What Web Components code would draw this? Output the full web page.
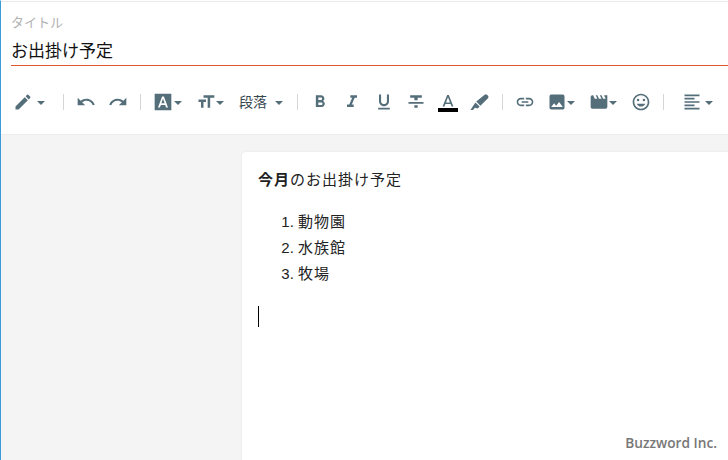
<!DOCTYPE html>
<html lang="ja">
<head>
<meta charset="utf-8">
<title>editor</title>
<style>
  html, body { margin: 0; height: 100%; overflow: hidden; }
  body { font-family: "Liberation Sans", "Noto Sans CJK JP", sans-serif; }
  li span { letter-spacing: 1px; }
</style>
</head>
<body>
<post-editor>
  <title-field label="タイトル" value="お出掛け予定"></title-field>
  <editor-toolbar></editor-toolbar>
  <editor-page>
    <p><b>今月</b>のお出掛け予定</p>
    <ol>
      <li><span>動物園</span></li>
      <li><span>水族館</span></li>
      <li><span>牧場</span></li>
    </ol>
    <text-caret></text-caret>
  </editor-page>
  <span slot="mark">Buzzword Inc.</span>
</post-editor>

<script>
const FONT = `"Liberation Sans", "Noto Sans CJK JP", sans-serif`;

const ICONS = {
  pencil: `<path d="M3 17.25V21h3.75L17.81 9.94l-3.75-3.75L3 17.25zM20.71 7.04a1 1 0 0 0 0-1.41l-2.34-2.34a1 1 0 0 0-1.41 0l-1.83 1.83 3.75 3.75 1.83-1.83z"/>`,
  undo: `<path d="M12.5 8c-2.65 0-5.05.99-6.9 2.6L2 7v9h9l-3.62-3.62c1.39-1.16 3.16-1.88 5.12-1.88 3.54 0 6.55 2.31 7.6 5.5l2.37-.78C21.08 11.03 17.15 8 12.5 8z"/>`,
  redo: `<path d="M18.4 10.6C16.55 8.99 14.15 8 11.5 8c-4.65 0-8.58 3.03-9.96 7.22L3.9 16c1.05-3.19 4.05-5.5 7.6-5.5 1.95 0 3.73.72 5.12 1.88L13 16h9V7l-3.6 3.6z"/>`,
  fontbox: `<path fill-rule="evenodd" d="M2 2h20v20H2V2zm8.9 3.5L6 18.5h2.3l1.1-3h5.2l1.1 3H18L13.1 5.5h-2.2zM12 8.2l1.9 5.3h-3.8L12 8.2z"/>`,
  size: `<path d="M9 4v3h5v12h3V7h5V4H9zm-6 8h3v7h3v-7h3V9H3v3z"/>`,
  bold: `<path d="M15.6 10.79c.97-.67 1.65-1.77 1.65-2.79 0-2.26-1.75-4-4-4H7v14h7.04c2.09 0 3.71-1.7 3.71-3.79 0-1.52-.86-2.82-2.15-3.42zM10 6.5h3c.83 0 1.5.67 1.5 1.5s-.67 1.5-1.5 1.5h-3v-3zm3.5 9H10v-3h3.5c.83 0 1.5.67 1.5 1.5s-.67 1.5-1.5 1.5z"/>`,
  italic: `<path d="M10 4v3h2.21l-3.42 8H6v3h8v-3h-2.21l3.42-8H18V4z"/>`,
  underline: `<path d="M12 17c3.31 0 6-2.69 6-6V3h-2.5v8c0 1.93-1.57 3.5-3.5 3.5S8.5 12.93 8.5 11V3H6v8c0 3.31 2.69 6 6 6zm-7 2v2h14v-2H5z"/>`,
  strike: `<path d="M10 19h4v-3h-4v3zM5 4v3h5v3h4V7h5V4H5zM3 14h18v-2H3v2z"/>`,
  color: `<path transform="translate(0 1.5)" d="M11 2 5.5 16h2.25l1.12-3h6.25l1.12 3h2.25L13 2h-2zm-1.38 9L12 4.67 14.38 11H9.62z"/>`,
  marker: `<path d="M17.6 3.4a2 2 0 0 1 2.8 0l1.2 1.2a2 2 0 0 1 0 2.8L12.5 16.5 7.5 11.5l10.1-8.1zM6.5 12.5l5 5-2.2 2.2-3.3-.7L3.5 21.5H.5L4.3 16z"/>`,
  link: `<path d="M3.9 12c0-1.71 1.39-3.1 3.1-3.1h4V7H7c-2.76 0-5 2.24-5 5s2.24 5 5 5h4v-1.9H7c-1.71 0-3.1-1.39-3.1-3.1zM8 13h8v-2H8v2zm9-6h-4v1.9h4c1.71 0 3.1 1.39 3.1 3.1s-1.39 3.1-3.1 3.1h-4V17h4c2.76 0 5-2.24 5-5s-2.24-5-5-5z"/>`,
  image: `<path fill-rule="evenodd" d="M5 3h14a2 2 0 0 1 2 2v14a2 2 0 0 1-2 2H5a2 2 0 0 1-2-2V5a2 2 0 0 1 2-2zM8.5 13.5 5 18h14l-4.5-6L11 16.5l-2.5-3z"/>`,
  movie: `<path d="m18 4 2 4h-3l-2-4h-2l2 4h-3l-2-4H8l2 4H7L5 4H4a2 2 0 0 0-2 2v12c0 1.1.9 2 2 2h16a2 2 0 0 0 2-2V4h-4z"/>`,
  smile: `<path d="M11.99 2C6.47 2 2 6.48 2 12s4.47 10 9.99 10C17.52 22 22 17.52 22 12S17.52 2 11.99 2zM12 20c-4.42 0-8-3.58-8-8s3.58-8 8-8 8 3.58 8 8-3.58 8-8 8z"/><circle cx="15.5" cy="9.5" r="1.5"/><circle cx="8.5" cy="9.5" r="1.5"/><path d="M12 17.5c2.33 0 4.31-1.46 5.11-3.5H6.89c.8 2.04 2.78 3.5 5.11 3.5z"/>`,
  align: `<path d="M3 3h18v2H3V3zm0 4h12v2H3V7zm0 4h18v2H3v-2zm0 4h12v2H3v-2zm0 4h18v2H3v-2z"/>`
};

class TitleField extends HTMLElement {
  constructor() {
    super();
    this.attachShadow({ mode: "open" });
  }

  connectedCallback() {
    this.shadowRoot.innerHTML = /* html */ `
      <style>
        :host { display: block; padding: 12px 0 0 10px; background: #fff; border-top: 1px solid #ececec; }
        .label { font-size: 13px; line-height: 17px; color: #b3b3b3; }
        .value { box-sizing: content-box; margin-top: 9px; font-size: 17px; line-height: 24px; height: 25px; color: #111; border-bottom: 1px solid #e4572e; }
      </style>
      <div class="label">${this.getAttribute("label")}</div>
      <div class="value">${this.getAttribute("value")}</div>
    `;
  }
}

class ToolButton extends HTMLElement {
  constructor() {
    super();
    this.attachShadow({ mode: "open" });
  }

  connectedCallback() {
    const icon = this.getAttribute("icon");
    const caret = this.hasAttribute("caret") ? `<i class="caret"></i>` : "";
    const bar = this.hasAttribute("bar") ? `<i class="bar"></i>` : "";
    const glyph = icon
      ? `<svg width="20" height="20" viewBox="0 0 24 24" fill="#546e7a">${ICONS[icon]}</svg>`
      : `<slot></slot>`;
    this.shadowRoot.innerHTML = /* html */ `
      <style>
        :host { display: inline-flex; flex: none; align-items: center; position: relative; height: 20px; padding: 0 6px; font-size: 14px; line-height: 20px; color: #37474f; }
        .caret { margin: 2px 0 0 var(--caret-gap, 0); width: 0; height: 0; border: 4px solid transparent; border-top: 4px solid #546e7a; border-bottom: 0; }
        .bar { position: absolute; left: 6px; width: 20px; bottom: 0; height: 4px; background: #000; }
        svg { display: block; }
      </style>
      ${glyph}${caret}${bar}
    `;
  }
}

class ToolDivider extends HTMLElement {
  constructor() {
    super();
    this.attachShadow({ mode: "open" });
  }

  connectedCallback() {
    this.shadowRoot.innerHTML = `<style>:host { display: block; flex: none; width: 1px; height: 16px; margin: 0 6px; background: #d5d5d5; }</style>`;
  }
}

class EditorToolbar extends HTMLElement {
  constructor() {
    super();
    this.attachShadow({ mode: "open" });
  }

  connectedCallback() {
    this.shadowRoot.innerHTML = /* html */ `
      <style>
        :host { display: block; background: #fff; border-bottom: 1px solid #ececec; }
        .row { display: flex; align-items: center; height: 68px; padding: 4px 0 0 5.5px; box-sizing: border-box; white-space: nowrap; }
      </style>
      <div class="row">
        <tool-button icon="pencil" caret style="--caret-gap:4px; margin-right:6.5px"></tool-button>
        <tool-divider></tool-divider>
        <tool-button icon="undo"></tool-button>
        <tool-button icon="redo"></tool-button>
        <tool-divider></tool-divider>
        <tool-button icon="fontbox" caret style="--caret-gap:1px; margin-right:2px"></tool-button>
        <tool-button icon="size" caret style="margin-right:3px"></tool-button>
        <tool-button caret style="--caret-gap:8px; margin-right:2px">段落</tool-button>
        <tool-divider></tool-divider>
        <tool-button icon="bold"></tool-button>
        <tool-button icon="italic"></tool-button>
        <tool-button icon="underline"></tool-button>
        <tool-button icon="strike"></tool-button>
        <tool-button icon="color" bar></tool-button>
        <tool-button icon="marker"></tool-button>
        <tool-divider></tool-divider>
        <tool-button icon="link"></tool-button>
        <tool-button icon="image" caret style="margin-right:2px"></tool-button>
        <tool-button icon="movie" caret style="margin-right:2px"></tool-button>
        <tool-button icon="smile"></tool-button>
        <tool-divider></tool-divider>
        <tool-button icon="align" caret style="--caret-gap:3.5px; margin-left:5.5px"></tool-button>
      </div>
    `;
  }
}

class EditorPage extends HTMLElement {
  constructor() {
    super();
    this.attachShadow({ mode: "open" });
  }

  connectedCallback() {
    this.shadowRoot.innerHTML = /* html */ `
      <style>
        :host { display: block; box-sizing: border-box; margin: 17px 0 0 241px; height: 400px; padding: 15px 16px; background: #fff; border-radius: 4px 0 0 0; box-shadow: 0 0 2px rgba(0,0,0,.08); font-size: 15px; color: #222; letter-spacing: 1px; line-height: 26px; }
        ::slotted(p) { margin: 0 0 16px; }
        ::slotted(ol) { margin: 0 0 19px; padding-left: 40px; letter-spacing: 0; }
      </style>
      <slot></slot>
    `;
  }
}

class TextCaret extends HTMLElement {
  constructor() {
    super();
    this.attachShadow({ mode: "open" });
  }

  connectedCallback() {
    this.shadowRoot.innerHTML = `<style>:host { display: block; width: 1px; height: 21px; background: #000; }</style>`;
  }
}

class PostEditor extends HTMLElement {
  constructor() {
    super();
    this.attachShadow({ mode: "open" });
  }

  connectedCallback() {
    this.shadowRoot.innerHTML = /* html */ `
      <style>
        :host { display: block; position: relative; box-sizing: border-box; height: 460px; overflow: hidden; background: #f4f4f4; border-left: 1px solid #3a9bd8; border-top: 1px solid #fff; font-family: ${FONT}; }
        .mark { position: absolute; right: 11px; bottom: 8px; font-family: "Open Sans", "Liberation Sans", sans-serif; font-size: 13.7px; font-weight: 600; color: #777; }
      </style>
      <slot></slot>
      <div class="mark"><slot name="mark"></slot></div>
    `;
  }
}

customElements.define("title-field", TitleField);
customElements.define("tool-button", ToolButton);
customElements.define("tool-divider", ToolDivider);
customElements.define("editor-toolbar", EditorToolbar);
customElements.define("editor-page", EditorPage);
customElements.define("text-caret", TextCaret);
customElements.define("post-editor", PostEditor);
</script>
</body>
</html>
